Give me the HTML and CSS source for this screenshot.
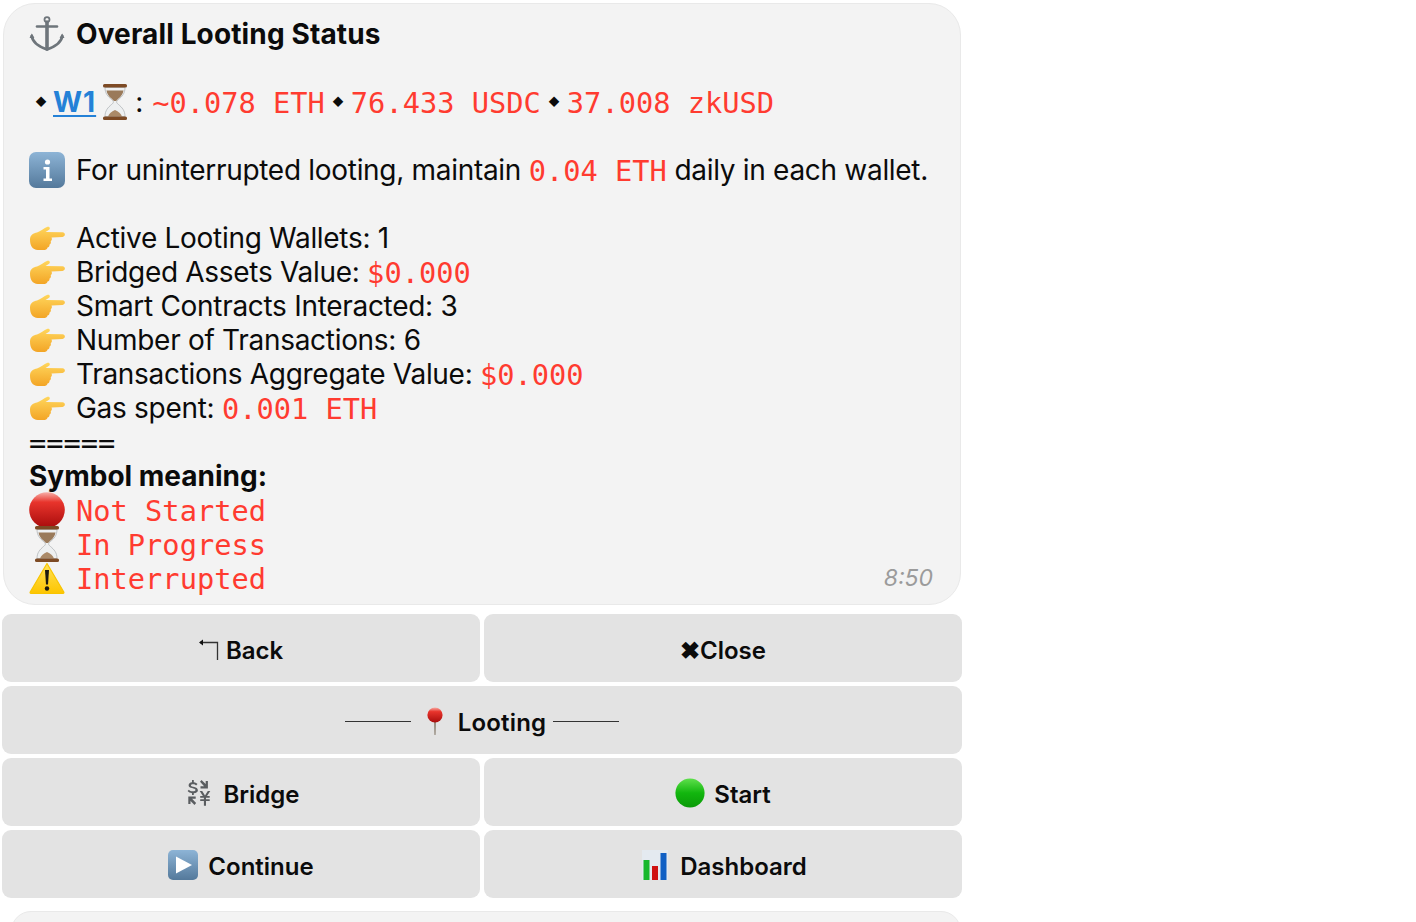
FILE: index.html
```html
<!DOCTYPE html>
<html lang="en">
<head>
<meta charset="utf-8">
<title>Overall Looting Status</title>
<link rel="stylesheet" href="styles.css">
</head>
<body>
<svg class="defs" width="0" height="0" aria-hidden="true">
  <defs>
    <linearGradient id="gRed" x1="0" y1="0" x2="0" y2="1"><stop offset="0" stop-color="#f7b0a8"/><stop offset=".28" stop-color="#e8342c"/><stop offset="1" stop-color="#a80c0c"/></linearGradient>
    <linearGradient id="gGreen" x1="0" y1="0" x2="0" y2="1"><stop offset="0" stop-color="#5fe04c"/><stop offset=".5" stop-color="#12b60e"/><stop offset="1" stop-color="#0a9a08"/></linearGradient>
    <linearGradient id="gBlue" x1="0" y1="0" x2="0" y2="1"><stop offset="0" stop-color="#8db4d6"/><stop offset="1" stop-color="#54799b"/></linearGradient>
    <linearGradient id="gYellow" x1="0" y1="0" x2="0" y2="1"><stop offset="0" stop-color="#ffe257"/><stop offset="1" stop-color="#fdc500"/></linearGradient>
    <linearGradient id="gHand" x1="0" y1="0" x2="0" y2="1"><stop offset="0" stop-color="#ffd65c"/><stop offset="1" stop-color="#f3a526"/></linearGradient>
    <symbol id="i-anchor" viewBox="0 0 36 36">
      <g fill="none" stroke="#6e757b" stroke-linecap="round">
        <circle cx="18" cy="3.600" r="2.500" stroke-width="1.800"/>
        <path d="M18 6v27" stroke-width="3.600"/>
        <path d="M8 10.500h20" stroke-width="2.600"/>
        <path d="M2.800 20c.5 6.500 7 10.500 15.200 13.500 8.200-3 14.700-7 15.200-13.500" stroke-width="2.800"/>
      </g>
      <path d="M.5 22l2.300-4.500 2.600 4.500zM30.600 22l2.600-4.500 2.300 4.500z" fill="#6e757b"/>
    </symbol>
    <symbol id="i-glass" viewBox="5 0 26 36">
      <path d="M8 3.500h20c0 6-3 9-6.500 12-2.500 2-2.500 3 0 5 3.500 3 6.500 6 6.500 12H8c0-6 3-9 6.500-12 2.500-2 2.500-3 0-5C11 12.500 8 9.500 8 3.500z" fill="#eef0f1" stroke="#a9adb0" stroke-width=".7"/>
      <path d="M9.500 6.500h17c-.6 3.400-2.500 6-5 8l-2.500 2.500h-2l-2.500-2.500c-2.500-2-4.400-4.600-5-8z" fill="#9a7a5a"/>
      <path d="M11 32.500c1-3 3.500-5 7-6.500 3.500 1.500 6 3.500 7 6.500z" fill="#ab8a68"/>
      <rect x="6" y="0" width="24" height="3.500" rx="1.500" fill="#7d4a24"/>
      <rect x="6" y="32.500" width="24" height="3.500" rx="1.500" fill="#7d4a24"/>
    </symbol>
    <symbol id="i-info" viewBox="0 0 36 36">
      <rect width="36" height="36" rx="7" fill="url(#gBlue)"/>
      <circle cx="18.500" cy="10" r="2.600" fill="#fff"/>
      <path d="M14.500 15h6v11.500h2.500V29h-8.500v-2.500h2.500v-9h-2.500z" fill="#fff"/>
    </symbol>
    <symbol id="i-hand" viewBox="0 0 36 24">
      <path d="M1 13.500C1 9 4.500 7 8 6.500 11.500 5.500 15 2 18.500.8c2.300-.5 3.300 1.800 1.200 3.200L16.500 6 33.500 6.300c3.200.2 3.200 4.400 0 4.600l-11 .6c.8 1.500.3 3-.8 3.600.5 1.500 0 3-1.200 3.400.2 1.500-.8 2.700-2 2.900-.2 1.600-1.500 2.500-3 2.500H9C3.500 24 1 19.500 1 13.500z" fill="url(#gHand)"/>
    </symbol>
    <symbol id="i-red" viewBox="0 0 36 36">
      <circle cx="18" cy="18" r="17.800" fill="url(#gRed)"/>
    </symbol>
    <symbol id="i-green" viewBox="0 0 36 36">
      <circle cx="18" cy="18" r="17.500" fill="url(#gGreen)"/>
    </symbol>
    <symbol id="i-warn" viewBox="0 -2 36 36">
      <path d="M18 1.500L34.800 30a1 1 0 0 1-.8 1.500H2a1 1 0 0 1-.8-1.500z" fill="url(#gYellow)" stroke="#f8c400" stroke-width="1.200" stroke-linejoin="round"/>
      <path d="M16 8h4l-1 14.500h-2z" fill="#1c1a10"/>
      <circle cx="18" cy="26.500" r="2.200" fill="#1c1a10"/>
    </symbol>
    <symbol id="i-pin" viewBox="0 0 16 28">
      <path d="M7 13h2l-.4 14.500a.6.6 0 0 1-1.200 0z" fill="#8f8577"/>
      <circle cx="8" cy="8" r="7.600" fill="url(#gRed)"/>
    </symbol>
    <symbol id="i-bridge" viewBox="0 0 25 26" fill="#5a5d60">
      <path d="M5.500 0h1.800v2.300c1.800.2 3 .9 3.700 1.700L9.600 5.500c-.7-.8-1.700-1.300-3-1.300-1.400 0-2.200.5-2.200 1.300 0 2 7 .7 7 4.700 0 1.700-1.500 2.900-4.100 3.100V15H5.500v-1.800c-2-.2-3.500-1-4.400-2.100L2.400 9.700c.9 1 2.300 1.600 3.800 1.600 1.700 0 2.800-.5 2.800-1.400 0-2.300-6.900-.8-6.900-4.600 0-1.600 1.300-2.700 3.400-3z"/>
      <path d="M15 0l4.200 4V1h2.200v7.400H14V6.200h3.600L13.500 1.800z"/>
      <path d="M8 25l-4-4v3H1.800v-7.400H9.200v2.200H5.600l4 4.200z"/>
      <path d="M13.200 11h2.500l2.800 4.500 2.800-4.500h2.500l-3.300 5h2.700v1.800h-3.700v1.500h3.700V21h-3.700v4.800h-2.100V21h-3.700v-1.700h3.700v-1.500h-3.700V16h2.700z"/>
    </symbol>
    <symbol id="i-play" viewBox="0 0 30 30">
      <rect width="30" height="30" rx="5" fill="url(#gBlue)"/>
      <path d="M8 6.500L24 15 8 23.500z" fill="#fff"/>
    </symbol>
    <symbol id="i-chart" viewBox="0 0 26 30">
      <rect width="26" height="30" fill="#e4eaf0"/>
      <rect x="1.500" y="10" width="6" height="20" fill="#18b82c"/>
      <rect x="10" y="16" width="6" height="14" fill="#cf1212"/>
      <rect x="18.500" y="3" width="6" height="27" fill="#1160c4"/>
    </symbol>
  </defs>
</svg>

<main class="page">
  <article class="bubble">
    <p class="line title"><svg class="emo"><use href="#i-anchor"/></svg><b>Overall Looting Status</b></p>
    <p class="line">&nbsp;</p>
    <p class="line"><span class="dia first">◆</span><a class="wallet" href="#">W1</a><svg class="glass-inline"><use href="#i-glass"/></svg><span class="colon">:</span><code class="red">~0.078 ETH</code><span class="dia">◆</span><code class="red">76.433 USDC</code><span class="dia">◆</span><code class="red">37.008 zkUSD</code></p>
    <p class="line">&nbsp;</p>
    <p class="line"><svg class="emo"><use href="#i-info"/></svg>For uninterrupted looting, maintain <code class="red">0.04 ETH</code> daily in each wallet.</p>
    <p class="line">&nbsp;</p>
    <p class="line"><svg class="emo"><use href="#i-hand"/></svg>Active Looting Wallets: 1</p>
    <p class="line"><svg class="emo"><use href="#i-hand"/></svg>Bridged Assets Value: <code class="red">$0.000</code></p>
    <p class="line"><svg class="emo"><use href="#i-hand"/></svg>Smart Contracts Interacted: 3</p>
    <p class="line"><svg class="emo"><use href="#i-hand"/></svg>Number of Transactions: 6</p>
    <p class="line"><svg class="emo"><use href="#i-hand"/></svg>Transactions Aggregate Value: <code class="red">$0.000</code></p>
    <p class="line"><svg class="emo"><use href="#i-hand"/></svg>Gas spent: <code class="red">0.001 ETH</code></p>
    <p class="line"><code>=====</code></p>
    <p class="line"><b>Symbol meaning:</b></p>
    <p class="line"><svg class="emo"><use href="#i-red"/></svg><code class="red">Not Started</code></p>
    <p class="line"><svg class="emo"><use href="#i-glass"/></svg><code class="red">In Progress</code></p>
    <p class="line last"><svg class="emo"><use href="#i-warn"/></svg><code class="red">Interrupted</code><time class="time">8:50</time></p>
  </article>

  <section class="keyboard">
    <button class="key"><svg class="back" viewBox="0 0 20 22"><path d="M1 4.500h17.500V22" fill="none" stroke="#333" stroke-width="1.300"/><path d="M0 4.500L4 1.500v6z" fill="#111"/></svg>Back</button>
    <button class="key">✖Close</button>
    <button class="key wide"><span class="rule"></span><svg class="pin"><use href="#i-pin"/></svg><span class="looting">Looting</span><span class="rule r2"></span></button>
    <button class="key"><svg class="k-bridge"><use href="#i-bridge"/></svg>Bridge</button>
    <button class="key"><svg class="k-green"><use href="#i-green"/></svg>Start</button>
    <button class="key"><svg class="k-play"><use href="#i-play"/></svg>Continue</button>
    <button class="key"><svg class="k-chart"><use href="#i-chart"/></svg>Dashboard</button>
  </section>

  <div class="next"></div>
</main>
</body>
</html>
```

FILE: styles.css
```css
* { box-sizing: border-box; }
html, body { margin: 0; height: 100%; overflow: hidden; background: #fff; }
body { font-family: Inter, "Liberation Sans", sans-serif; color: #0b0b0b; }
.defs { position: absolute; }
.page { width: 964px; padding: 3px 2px 0; }
.bubble {
  width: 958px;
  margin-left: 1px;
  height: 602px;
  padding: 13px 27px 0 25px;
  background: #f3f3f3;
  border: 1px solid #e9e9e9;
  border-radius: 32px;
}
.line {
  margin: 0;
  height: 34px;
  line-height: 35px;
  font-size: 28px;
  letter-spacing: -0.3px;
  white-space: nowrap;
  position: relative;
}
.line b { font-weight: 700; letter-spacing: 0; }
.title b { letter-spacing: 0.13px; }
code {
  font-family: "DejaVu Sans Mono", monospace;
  font-size: 28.7px;
  letter-spacing: 0;
  vertical-align: -1px;
}
.red { color: #ff3b30; }
.emo {
  display: inline-block;
  width: 36px;
  height: 36px;
  margin: -1px 11px -1px 0;
  vertical-align: top;
}
.dia {
  display: inline-block;
  width: 12px;
  margin: 0 7px;
  text-align: center;
  font-size: 11px;
  line-height: 34px;
  vertical-align: top;
}
.first { margin: 0 6px; }
.wallet { color: #2481d7; font-weight: 700; letter-spacing: 1px; text-decoration: underline; text-underline-offset: 3px; }
.glass-inline { display: inline-block; width: 26px; height: 36px; margin: -1px 4px 0 6px; vertical-align: top; }
.colon { display: inline-block; width: 8px; margin: 0 9px 0 3px; }
.time {
  position: absolute;
  right: 0;
  top: 0;
  font-size: 23px;
  font-style: italic;
  color: #9b9b9b;
  letter-spacing: 0;
}
.keyboard {
  margin-top: 9px;
  display: grid;
  grid-template-columns: 478px 478px;
  gap: 4px;
}
.key {
  height: 68px;
  padding: 4px 0 0;
  border: 0;
  border-radius: 9px;
  background: #e3e3e3;
  color: #0b0b0b;
  font: 600 24px Inter, "Liberation Sans", sans-serif;
  display: flex;
  align-items: center;
  justify-content: center;
}
.wide { grid-column: 1 / 3; }
.back { width: 20px; height: 22px; margin: 0 7px 2px 0; }
.rule { width: 66px; height: 1px; background: #333; margin: 0 13px 2px 0; }
.r2 { margin: 0 0 2px 7px; }
.pin { width: 22px; height: 28px; margin: 0 12px 2px 0; }
.looting { letter-spacing: 0.15px; }
.k-bridge { width: 26px; height: 26px; margin: 0 11px 2px 4px; }
.k-green { width: 30px; height: 30px; margin: 0 9px 2px 0; }
.k-play { width: 30px; height: 30px; margin: 0 10px 2px 0; }
.k-chart { width: 26px; height: 30px; margin: 0 12px 2px 3px; }
.next {
  margin: 13px 0 0 9px;
  height: 40px;
  width: 950px;
  background: #f3f3f3;
  border: 1px solid #e9e9e9;
  border-radius: 32px;
}
```
